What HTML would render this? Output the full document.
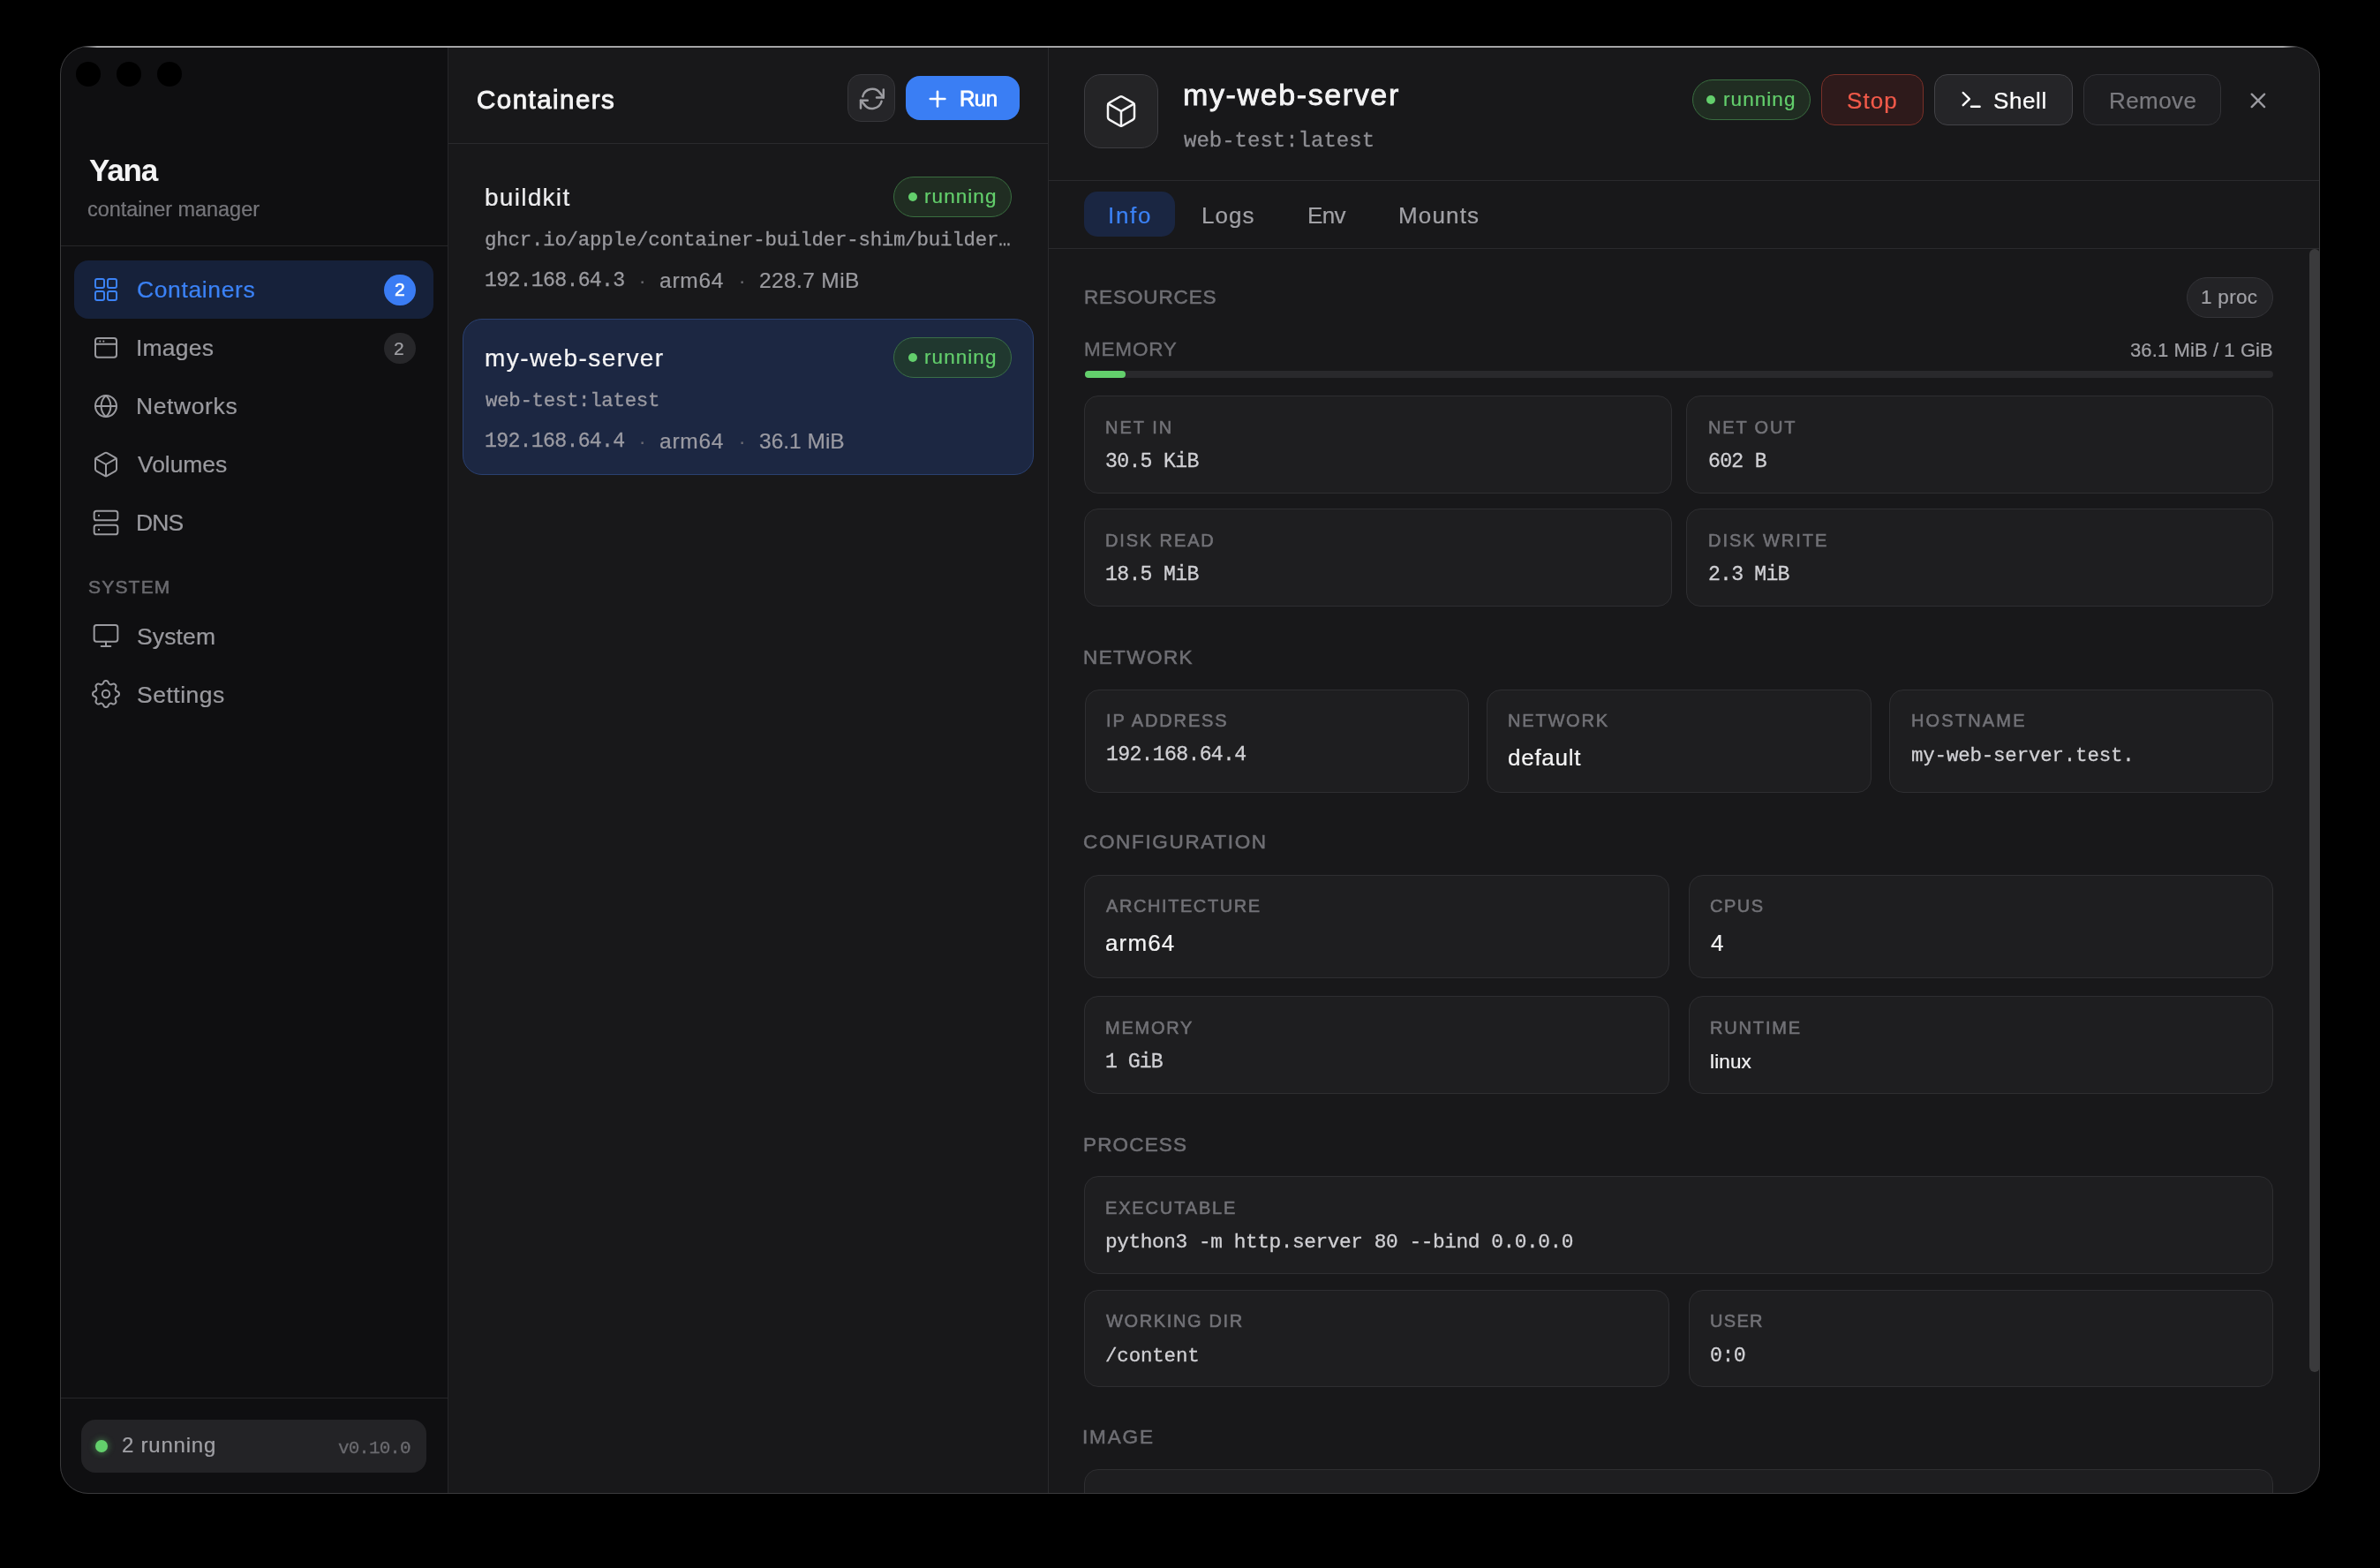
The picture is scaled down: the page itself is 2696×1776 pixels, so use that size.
<!DOCTYPE html>
<html><head><meta charset="utf-8"><title>Yana</title>
<style>
html,body{margin:0;padding:0;background:#000;width:2696px;height:1776px;overflow:hidden}
.t{position:absolute;white-space:nowrap;line-height:1;-webkit-font-smoothing:antialiased;will-change:transform}
.r{position:absolute;box-sizing:border-box}
#win{position:absolute;left:68px;top:52px;width:2560px;height:1640px;border-radius:32px;overflow:hidden;background:#18181a}
#win > .inner{position:absolute;left:-68px;top:-52px;width:2696px;height:1776px}
#frame{position:absolute;left:68px;top:52px;width:2560px;height:1640px;border-radius:32px;box-sizing:border-box;border:1px solid #3a3a3c;pointer-events:none}
#hl{position:absolute;left:94px;top:52px;width:2508px;height:2px;background:linear-gradient(to right,rgba(165,165,167,0),#a5a5a7 16px,#a5a5a7 calc(100% - 16px),rgba(165,165,167,0))}
</style></head><body>
<div id="win"><div class="inner">

<div class="r" style="left:68px;top:52px;width:439px;height:1640px;background:#0f0f11"></div>
<div class="r" style="left:507px;top:52px;width:1px;height:1640px;background:#262629"></div>
<div class="r" style="left:1187px;top:52px;width:1px;height:1640px;background:#2a2a2d"></div>
<div class="r" style="left:68px;top:278px;width:439px;height:1px;background:#262629"></div>
<div class="r" style="left:85.9px;top:69.8px;width:28px;height:28px;border-radius:14px;background:#000"></div>
<div class="r" style="left:131.9px;top:69.8px;width:28px;height:28px;border-radius:14px;background:#000"></div>
<div class="r" style="left:177.9px;top:69.8px;width:28px;height:28px;border-radius:14px;background:#000"></div>
<div class="r" style="left:84.00px;top:295.00px;width:407.00px;height:66.00px;background:#16213a;border-radius:16.00px;"></div>
<div class="r" style="left:434.50px;top:310.50px;width:36.00px;height:35.50px;background:#3a7cf4;border-radius:18.00px;"></div>
<div class="r" style="left:434.50px;top:376.50px;width:36.00px;height:35.50px;background:#27272a;border-radius:18.00px;"></div>
<div class="r" style="left:68.00px;top:1583.00px;width:439.00px;height:1.00px;background:#262629;border-radius:0.00px;"></div>
<div class="r" style="left:92.00px;top:1608.00px;width:391.00px;height:60.00px;background:#232326;border-radius:16.00px;"></div>
<div class="r" style="left:108.00px;top:1631.00px;width:14.00px;height:14.00px;background:#63cf6c;border-radius:7.00px;box-shadow:0 0 6px 2px rgba(94,196,106,0.35);"></div>
<div class="r" style="left:959.80px;top:84.00px;width:53.90px;height:53.80px;background:#252528;border:1px solid #36363a;border-radius:15.00px;"></div>
<div class="r" style="left:1026.00px;top:86.00px;width:129.00px;height:50.00px;background:#3a7ef4;border-radius:16.00px;"></div>
<div class="r" style="left:508.00px;top:162.00px;width:679.00px;height:1.00px;background:#2a2a2d;border-radius:0.00px;"></div>
<div class="r" style="left:1012.40px;top:200.30px;width:133.20px;height:45.30px;background:#202d22;border:1px solid #3a6e40;border-radius:23.00px;"></div>
<div class="r" style="left:1028.80px;top:217.80px;width:10.00px;height:10.00px;background:#63cf6c;border-radius:5.00px;"></div>
<div class="r" style="left:524.40px;top:361.20px;width:646.20px;height:177.30px;background:#1c2742;border:1px solid #2a4070;border-radius:22.00px;"></div>
<div class="r" style="left:1012.40px;top:382.00px;width:133.20px;height:45.60px;background:#20382f;border:1px solid #3a6e48;border-radius:23.00px;"></div>
<div class="r" style="left:1028.80px;top:399.80px;width:10.00px;height:10.00px;background:#63cf6c;border-radius:5.00px;"></div>
<div class="r" style="left:1228.20px;top:84.10px;width:83.50px;height:83.90px;background:#242426;border:1px solid #3c3c40;border-radius:19.00px;"></div>
<div class="r" style="left:1916.90px;top:90.30px;width:133.80px;height:45.40px;background:#202d22;border:1px solid #3a6e40;border-radius:23.00px;"></div>
<div class="r" style="left:1933.30px;top:107.80px;width:10.00px;height:10.00px;background:#63cf6c;border-radius:5.00px;"></div>
<div class="r" style="left:2062.90px;top:84.10px;width:115.80px;height:57.70px;background:#2e1a1b;border:1px solid #7a3028;border-radius:15.00px;"></div>
<div class="r" style="left:2191.00px;top:84.00px;width:156.60px;height:57.70px;background:#252528;border:1px solid #434347;border-radius:15.00px;"></div>
<div class="r" style="left:2360.20px;top:84.00px;width:155.50px;height:57.70px;background:#1d1d20;border:1px solid #323236;border-radius:15.00px;"></div>
<div class="r" style="left:1188.00px;top:204.00px;width:1440.00px;height:1.00px;background:#2a2a2d;border-radius:0.00px;"></div>
<div class="r" style="left:1228.40px;top:217.30px;width:102.20px;height:51.10px;background:#1a2642;border-radius:15.00px;"></div>
<div class="r" style="left:1188.00px;top:281.00px;width:1440.00px;height:1.00px;background:#2a2a2d;border-radius:0.00px;"></div>
<div class="r" style="left:2616.00px;top:282.00px;width:12.00px;height:1272.00px;background:#3a3a3c;border-radius:6.00px;"></div>
<div class="r" style="left:2476.80px;top:314.20px;width:98.50px;height:45.40px;background:#232326;border:1px solid #343438;border-radius:23.00px;"></div>
<div class="r" style="left:1228.50px;top:420.00px;width:1346.80px;height:8.00px;background:#29292c;border-radius:4.00px;"></div>
<div class="r" style="left:1228.50px;top:420.00px;width:46.50px;height:8.00px;background:#63cf6c;border-radius:4.00px;"></div>
<div class="r" style="left:1228.00px;top:448.20px;width:665.50px;height:111.20px;background:#1e1e20;border:1px solid #2e2e31;border-radius:16.00px;"></div>
<div class="r" style="left:1910.40px;top:448.20px;width:665.00px;height:111.20px;background:#1e1e20;border:1px solid #2e2e31;border-radius:16.00px;"></div>
<div class="r" style="left:1228.00px;top:576.20px;width:665.50px;height:110.80px;background:#1e1e20;border:1px solid #2e2e31;border-radius:16.00px;"></div>
<div class="r" style="left:1910.40px;top:576.20px;width:665.00px;height:110.80px;background:#1e1e20;border:1px solid #2e2e31;border-radius:16.00px;"></div>
<div class="r" style="left:1228.60px;top:780.50px;width:435.30px;height:117.10px;background:#1e1e20;border:1px solid #2e2e31;border-radius:16.00px;"></div>
<div class="r" style="left:1684.00px;top:780.50px;width:435.70px;height:117.10px;background:#1e1e20;border:1px solid #2e2e31;border-radius:16.00px;"></div>
<div class="r" style="left:2140.40px;top:780.50px;width:435.00px;height:117.10px;background:#1e1e20;border:1px solid #2e2e31;border-radius:16.00px;"></div>
<div class="r" style="left:1228.00px;top:990.50px;width:663.40px;height:117.10px;background:#1e1e20;border:1px solid #2e2e31;border-radius:16.00px;"></div>
<div class="r" style="left:1912.60px;top:990.50px;width:662.80px;height:117.10px;background:#1e1e20;border:1px solid #2e2e31;border-radius:16.00px;"></div>
<div class="r" style="left:1228.00px;top:1128.40px;width:663.40px;height:110.60px;background:#1e1e20;border:1px solid #2e2e31;border-radius:16.00px;"></div>
<div class="r" style="left:1912.60px;top:1128.40px;width:662.80px;height:110.60px;background:#1e1e20;border:1px solid #2e2e31;border-radius:16.00px;"></div>
<div class="r" style="left:1228.00px;top:1332.30px;width:1347.40px;height:110.90px;background:#1e1e20;border:1px solid #2e2e31;border-radius:16.00px;"></div>
<div class="r" style="left:1228.00px;top:1460.70px;width:663.40px;height:110.20px;background:#1e1e20;border:1px solid #2e2e31;border-radius:16.00px;"></div>
<div class="r" style="left:1912.60px;top:1460.70px;width:662.80px;height:110.20px;background:#1e1e20;border:1px solid #2e2e31;border-radius:16.00px;"></div>
<div class="r" style="left:1228.00px;top:1664.40px;width:1347.40px;height:135.60px;background:#1e1e20;border:1px solid #2e2e31;border-radius:16.00px;"></div>
<svg class="r" style="left:104.00px;top:312.00px" width="32" height="32" viewBox="0 0 24 24"><g fill="none" stroke="#3b82f6" stroke-width="1.5" stroke-linecap="round" stroke-linejoin="round"><rect x="3" y="3" width="7.5" height="7.5" rx="1.5"/><rect x="13.5" y="3" width="7.5" height="7.5" rx="1.5"/><rect x="3" y="13.5" width="7.5" height="7.5" rx="1.5"/><rect x="13.5" y="13.5" width="7.5" height="7.5" rx="1.5"/></g></svg>
<svg class="r" style="left:104.00px;top:378.00px" width="32" height="32" viewBox="0 0 24 24"><g fill="none" stroke="#9a9a9f" stroke-width="1.5" stroke-linecap="round" stroke-linejoin="round"><rect x="3" y="3.75" width="18" height="16.25" rx="2.2"/><path d="M3 8.9h18"/></g><circle cx="7" cy="6.45" r="0.8" fill="#9a9a9f"/><circle cx="10" cy="6.45" r="0.8" fill="#9a9a9f"/></svg>
<svg class="r" style="left:104.00px;top:444.00px" width="32" height="32" viewBox="0 0 24 24"><g fill="none" stroke="#9a9a9f" stroke-width="1.5" stroke-linecap="round" stroke-linejoin="round"><circle cx="12" cy="12" r="9"/><path d="M12 3a12 12 0 0 0 0 18a12 12 0 0 0 0-18"/><path d="M3 12h18"/></g></svg>
<svg class="r" style="left:104.00px;top:510.00px" width="32" height="32" viewBox="0 0 24 24"><g fill="none" stroke="#9a9a9f" stroke-width="1.5" stroke-linecap="round" stroke-linejoin="round"><path d="M21 8a2 2 0 0 0-1-1.73l-7-4a2 2 0 0 0-2 0l-7 4A2 2 0 0 0 3 8v8a2 2 0 0 0 1 1.73l7 4a2 2 0 0 0 2 0l7-4A2 2 0 0 0 21 16Z"/><path d="m3.3 7 8.7 5 8.7-5"/><path d="M12 22V12"/></g></svg>
<svg class="r" style="left:104.00px;top:576.00px" width="32" height="32" viewBox="0 0 24 24"><g fill="none" stroke="#9a9a9f" stroke-width="1.5" stroke-linecap="round" stroke-linejoin="round"><rect width="20" height="8" x="2" y="2" rx="2"/><rect width="20" height="8" x="2" y="14" rx="2"/></g><circle cx="6" cy="6" r="0.85" fill="#9a9a9f"/><circle cx="6" cy="18" r="0.85" fill="#9a9a9f"/></svg>
<svg class="r" style="left:104.00px;top:704.00px" width="32" height="32" viewBox="0 0 24 24"><g fill="none" stroke="#9a9a9f" stroke-width="1.5" stroke-linecap="round" stroke-linejoin="round"><rect width="20" height="14" x="2" y="3" rx="2"/><path d="M8 21h8"/><path d="M12 17v4"/></g></svg>
<svg class="r" style="left:100.00px;top:766.00px" width="40" height="40" viewBox="0 0 24 24"><g fill="none" stroke="#9a9a9f" stroke-width="1.2" stroke-linecap="round" stroke-linejoin="round"><path d="M10.325 4.317c.426 -1.756 2.924 -1.756 3.35 0a1.724 1.724 0 0 0 2.573 1.066c1.543 -.94 3.31 .826 2.37 2.37a1.724 1.724 0 0 0 1.065 2.572c1.756 .426 1.756 2.924 0 3.35a1.724 1.724 0 0 0 -1.066 2.573c.94 1.543 -.826 3.31 -2.37 2.37a1.724 1.724 0 0 0 -2.572 1.065c-.426 1.756 -2.924 1.756 -3.35 0a1.724 1.724 0 0 0 -2.573 -1.066c-1.543 .94 -3.31 -.826 -2.37 -2.37a1.724 1.724 0 0 0 -1.065 -2.572c-1.756 -.426 -1.756 -2.924 0 -3.35a1.724 1.724 0 0 0 1.066 -2.573c-.94 -1.543 .826 -3.31 2.37 -2.37c1 .608 2.296 .07 2.572 -1.065z"/><circle cx="12" cy="12" r="2.5"/></g></svg>
<svg class="r" style="left:1250.00px;top:106.00px" width="40" height="40" viewBox="0 0 24 24"><g fill="none" stroke="#f4f4f5" stroke-width="1.5" stroke-linecap="round" stroke-linejoin="round"><path d="M21 8a2 2 0 0 0-1-1.73l-7-4a2 2 0 0 0-2 0l-7 4A2 2 0 0 0 3 8v8a2 2 0 0 0 1 1.73l7 4a2 2 0 0 0 2 0l7-4A2 2 0 0 0 21 16Z"/><path d="m3.3 7 8.7 5 8.7-5"/><path d="M12 22V12"/></g></svg>
<svg class="r" style="left:960.00px;top:84.00px" width="54" height="54" viewBox="0 0 54 54"><g fill="none" stroke="#9c9ca1" stroke-width="2.5" stroke-linecap="round" stroke-linejoin="round"><path d="M17.3 25.2 A11 11 0 0 1 37 21.5 L40.8 26.4"/><path d="M40.8 17.6 V26.4 H33"/><path d="M38.6 30.8 A11 11 0 0 1 18.9 34.2 L15 29.8"/><path d="M15 38.4 V29.8 H22.8"/></g></svg>
<svg class="r" style="left:1050.00px;top:100.00px" width="24" height="24" viewBox="0 0 24 24"><g stroke="#ffffff" stroke-width="2.6" stroke-linecap="round"><path d="M12 3.8v16.6"/><path d="M3.8 12h16.6"/></g></svg>
<svg class="r" style="left:2219.00px;top:99.00px" width="28" height="28" viewBox="0 0 28 28"><g fill="none" stroke="#ffffff" stroke-width="2.4" stroke-linecap="round" stroke-linejoin="round"><path d="M4.7 6 L11.9 13.1 L4.7 20.2"/><path d="M14 21.8 H23.6"/></g></svg>
<svg class="r" style="left:2546.00px;top:102.00px" width="24" height="24" viewBox="0 0 24 24"><g stroke="#9a9aa0" stroke-width="2.4" stroke-linecap="round"><path d="M4.7 4.7 L19.1 19.1"/><path d="M19.1 4.7 L4.7 19.1"/></g></svg>
<div id="yana" class="t" style="left:100.80px;top:174.85px;font-size:35.00px;font-family:'Liberation Sans', sans-serif;font-weight:700;color:#f4f4f5;letter-spacing:-1.133px">Yana</div>
<div id="cmgr" class="t" style="left:99.30px;top:226.22px;font-size:23.50px;font-family:'Liberation Sans', sans-serif;font-weight:400;color:#76767b;letter-spacing:-0.062px;-webkit-text-stroke:0.22px #76767b">container manager</div>
<div id="nav0" class="t" style="left:154.70px;top:315.08px;font-size:26.50px;font-family:'Liberation Sans', sans-serif;font-weight:400;color:#3b82f6;letter-spacing:0.622px;-webkit-text-stroke:0.22px #3b82f6">Containers</div>
<div id="nav1" class="t" style="left:153.70px;top:381.08px;font-size:26.50px;font-family:'Liberation Sans', sans-serif;font-weight:400;color:#9a9a9f;letter-spacing:0.200px;-webkit-text-stroke:0.22px #9a9a9f">Images</div>
<div id="nav2" class="t" style="left:153.70px;top:447.08px;font-size:26.50px;font-family:'Liberation Sans', sans-serif;font-weight:400;color:#9a9a9f;letter-spacing:0.600px;-webkit-text-stroke:0.22px #9a9a9f">Networks</div>
<div id="nav3" class="t" style="left:155.70px;top:513.08px;font-size:26.50px;font-family:'Liberation Sans', sans-serif;font-weight:400;color:#9a9a9f;letter-spacing:-0.067px;-webkit-text-stroke:0.22px #9a9a9f">Volumes</div>
<div id="nav4" class="t" style="left:153.70px;top:579.08px;font-size:26.50px;font-family:'Liberation Sans', sans-serif;font-weight:400;color:#9a9a9f;letter-spacing:-0.900px;-webkit-text-stroke:0.22px #9a9a9f">DNS</div>
<div id="sys" class="t" style="left:100.00px;top:653.65px;font-size:21.00px;font-family:'Liberation Sans', sans-serif;font-weight:400;color:#6a6a6f;letter-spacing:1.200px;-webkit-text-stroke:0.55px #6a6a6f">SYSTEM</div>
<div id="nav5" class="t" style="left:154.70px;top:707.88px;font-size:26.50px;font-family:'Liberation Sans', sans-serif;font-weight:400;color:#9a9a9f;letter-spacing:0.120px;-webkit-text-stroke:0.22px #9a9a9f">System</div>
<div id="nav6" class="t" style="left:154.70px;top:773.88px;font-size:26.50px;font-family:'Liberation Sans', sans-serif;font-weight:400;color:#9a9a9f;letter-spacing:0.514px;-webkit-text-stroke:0.22px #9a9a9f">Settings</div>
<div id="b1" class="t" style="left:446.50px;top:317.45px;font-size:21.00px;font-family:'Liberation Sans', sans-serif;font-weight:400;color:#ffffff;letter-spacing:0.000px;-webkit-text-stroke:0.55px #ffffff">2</div>
<div id="b2" class="t" style="left:445.50px;top:383.55px;font-size:21.00px;font-family:'Liberation Sans', sans-serif;font-weight:400;color:#a1a1a6;letter-spacing:0.000px;-webkit-text-stroke:0.22px #a1a1a6">2</div>
<div id="run2" class="t" style="left:137.80px;top:1625.20px;font-size:24.00px;font-family:'Liberation Sans', sans-serif;font-weight:400;color:#a1a1a6;letter-spacing:0.775px;-webkit-text-stroke:0.22px #a1a1a6">2 running</div>
<div id="ver" class="t" style="left:383.30px;top:1629.64px;font-size:21.00px;font-family:'Liberation Mono', monospace;font-weight:400;color:#6a6a6f;letter-spacing:-0.933px;-webkit-text-stroke:0.30px #6a6a6f">v0.10.0</div>
<div id="ctitle" class="t" style="left:539.80px;top:97.83px;font-size:29.50px;font-family:'Liberation Sans', sans-serif;font-weight:400;color:#f4f4f5;letter-spacing:1.467px;-webkit-text-stroke:0.90px #f4f4f5">Containers</div>
<div id="runbtn" class="t" style="left:1087.20px;top:99.70px;font-size:24.00px;font-family:'Liberation Sans', sans-serif;font-weight:400;color:#ffffff;letter-spacing:-0.500px;-webkit-text-stroke:0.80px #ffffff">Run</div>
<div id="bk" class="t" style="left:549.00px;top:210.00px;font-size:28.00px;font-family:'Liberation Sans', sans-serif;font-weight:400;color:#ececee;letter-spacing:1.286px;-webkit-text-stroke:0.22px #ececee">buildkit</div>
<div id="bkimg" class="t" style="left:549.00px;top:261.38px;font-size:22.40px;font-family:'Liberation Mono', monospace;font-weight:400;color:#9a9a9f;letter-spacing:-0.205px;-webkit-text-stroke:0.30px #9a9a9f">ghcr.io/apple/container-builder-shim/builder…</div>
<div id="bkip" class="t" style="left:549.00px;top:307.37px;font-size:23.20px;font-family:'Liberation Mono', monospace;font-weight:400;color:#9a9a9f;letter-spacing:-0.709px;-webkit-text-stroke:0.30px #9a9a9f">192.168.64.3</div>
<div id="bkd1" class="t" style="left:723.50px;top:308.30px;font-size:22.00px;font-family:'Liberation Sans', sans-serif;font-weight:400;color:#6a6a6f;letter-spacing:0.000px;-webkit-text-stroke:0.22px #6a6a6f">·</div>
<div id="bkarch" class="t" style="left:747.00px;top:305.68px;font-size:24.50px;font-family:'Liberation Sans', sans-serif;font-weight:400;color:#9a9a9f;letter-spacing:0.750px;-webkit-text-stroke:0.22px #9a9a9f">arm64</div>
<div id="bkd2" class="t" style="left:836.90px;top:308.30px;font-size:22.00px;font-family:'Liberation Sans', sans-serif;font-weight:400;color:#6a6a6f;letter-spacing:0.000px;-webkit-text-stroke:0.22px #6a6a6f">·</div>
<div id="bkmem" class="t" style="left:860.00px;top:305.68px;font-size:24.50px;font-family:'Liberation Sans', sans-serif;font-weight:400;color:#9a9a9f;letter-spacing:0.375px;-webkit-text-stroke:0.22px #9a9a9f">228.7 MiB</div>
<div id="bkrun" class="t" style="left:1047.10px;top:212.07px;font-size:22.50px;font-family:'Liberation Sans', sans-serif;font-weight:400;color:#63cf6c;letter-spacing:1.067px;-webkit-text-stroke:0.22px #63cf6c">running</div>
<div id="ws" class="t" style="left:549.00px;top:392.10px;font-size:28.00px;font-family:'Liberation Sans', sans-serif;font-weight:400;color:#f4f4f5;letter-spacing:1.417px;-webkit-text-stroke:0.22px #f4f4f5">my-web-server</div>
<div id="wsimg" class="t" style="left:550.00px;top:442.98px;font-size:22.40px;font-family:'Liberation Mono', monospace;font-weight:400;color:#9a9aa2;letter-spacing:-0.300px;-webkit-text-stroke:0.30px #9a9aa2">web-test:latest</div>
<div id="wsip" class="t" style="left:549.00px;top:489.37px;font-size:23.20px;font-family:'Liberation Mono', monospace;font-weight:400;color:#9a9aa2;letter-spacing:-0.709px;-webkit-text-stroke:0.30px #9a9aa2">192.168.64.4</div>
<div id="wsd1" class="t" style="left:723.50px;top:490.30px;font-size:22.00px;font-family:'Liberation Sans', sans-serif;font-weight:400;color:#6a6a72;letter-spacing:0.000px;-webkit-text-stroke:0.22px #6a6a72">·</div>
<div id="wsarch" class="t" style="left:747.00px;top:488.18px;font-size:24.50px;font-family:'Liberation Sans', sans-serif;font-weight:400;color:#9a9aa2;letter-spacing:0.750px;-webkit-text-stroke:0.22px #9a9aa2">arm64</div>
<div id="wsd2" class="t" style="left:836.90px;top:490.30px;font-size:22.00px;font-family:'Liberation Sans', sans-serif;font-weight:400;color:#6a6a72;letter-spacing:0.000px;-webkit-text-stroke:0.22px #6a6a72">·</div>
<div id="wsmem" class="t" style="left:860.00px;top:488.18px;font-size:24.50px;font-family:'Liberation Sans', sans-serif;font-weight:400;color:#9a9aa2;letter-spacing:0.000px;-webkit-text-stroke:0.22px #9a9aa2">36.1 MiB</div>
<div id="wsrun" class="t" style="left:1047.10px;top:393.77px;font-size:22.50px;font-family:'Liberation Sans', sans-serif;font-weight:400;color:#63cf6c;letter-spacing:1.067px;-webkit-text-stroke:0.22px #63cf6c">running</div>
<div id="dtitle" class="t" style="left:1340.00px;top:90.30px;font-size:34.00px;font-family:'Liberation Sans', sans-serif;font-weight:400;color:#f4f4f5;letter-spacing:1.617px;-webkit-text-stroke:0.80px #f4f4f5">my-web-server</div>
<div id="dimg" class="t" style="left:1341.00px;top:147.56px;font-size:24.00px;font-family:'Liberation Mono', monospace;font-weight:400;color:#8e8e93;letter-spacing:0.000px;-webkit-text-stroke:0.30px #8e8e93">web-test:latest</div>
<div id="drun" class="t" style="left:1951.70px;top:102.08px;font-size:22.50px;font-family:'Liberation Sans', sans-serif;font-weight:400;color:#63cf6c;letter-spacing:1.067px;-webkit-text-stroke:0.22px #63cf6c">running</div>
<div id="stop" class="t" style="left:2092.10px;top:101.30px;font-size:26.00px;font-family:'Liberation Sans', sans-serif;font-weight:400;color:#f25a4a;letter-spacing:1.067px;-webkit-text-stroke:0.22px #f25a4a">Stop</div>
<div id="shell" class="t" style="left:2258.10px;top:100.90px;font-size:26.00px;font-family:'Liberation Sans', sans-serif;font-weight:400;color:#ffffff;letter-spacing:0.600px;-webkit-text-stroke:0.22px #ffffff">Shell</div>
<div id="remove" class="t" style="left:2388.50px;top:100.90px;font-size:26.00px;font-family:'Liberation Sans', sans-serif;font-weight:400;color:#7a7a7f;letter-spacing:0.420px;-webkit-text-stroke:0.22px #7a7a7f">Remove</div>
<div id="tinfo" class="t" style="left:1255.00px;top:230.60px;font-size:26.00px;font-family:'Liberation Sans', sans-serif;font-weight:400;color:#3b82f6;letter-spacing:1.667px;-webkit-text-stroke:0.22px #3b82f6">Info</div>
<div id="tlogs" class="t" style="left:1361.40px;top:230.60px;font-size:26.00px;font-family:'Liberation Sans', sans-serif;font-weight:400;color:#a1a1a6;letter-spacing:1.067px;-webkit-text-stroke:0.22px #a1a1a6">Logs</div>
<div id="tenv" class="t" style="left:1480.50px;top:230.60px;font-size:26.00px;font-family:'Liberation Sans', sans-serif;font-weight:400;color:#a1a1a6;letter-spacing:-0.700px;-webkit-text-stroke:0.22px #a1a1a6">Env</div>
<div id="tmnt" class="t" style="left:1584.00px;top:230.60px;font-size:26.00px;font-family:'Liberation Sans', sans-serif;font-weight:400;color:#a1a1a6;letter-spacing:1.160px;-webkit-text-stroke:0.22px #a1a1a6">Mounts</div>
<div id="sres" class="t" style="left:1227.50px;top:326.18px;font-size:22.50px;font-family:'Liberation Sans', sans-serif;font-weight:400;color:#6f6f74;letter-spacing:0.875px;-webkit-text-stroke:0.55px #6f6f74">RESOURCES</div>
<div id="proc" class="t" style="left:2493.00px;top:326.18px;font-size:22.50px;font-family:'Liberation Sans', sans-serif;font-weight:400;color:#a1a1a6;letter-spacing:0.300px;-webkit-text-stroke:0.22px #a1a1a6">1 proc</div>
<div id="smem" class="t" style="left:1227.50px;top:384.98px;font-size:22.50px;font-family:'Liberation Sans', sans-serif;font-weight:400;color:#6f6f74;letter-spacing:0.800px;-webkit-text-stroke:0.40px #6f6f74">MEMORY</div>
<div id="memv" class="t" style="left:2413.40px;top:385.60px;font-size:22.00px;font-family:'Liberation Sans', sans-serif;font-weight:400;color:#a1a1a6;letter-spacing:0.107px;-webkit-text-stroke:0.22px #a1a1a6">36.1 MiB / 1 GiB</div>
<div id="l_NET_IN" class="t" style="left:1252.40px;top:473.70px;font-size:20.00px;font-family:'Liberation Sans', sans-serif;font-weight:400;color:#727277;letter-spacing:2.000px;-webkit-text-stroke:0.55px #727277">NET IN</div>
<div id="v_NET_IN" class="t" style="left:1252.40px;top:512.07px;font-size:23.20px;font-family:'Liberation Mono', monospace;font-weight:400;color:#d0d0d4;letter-spacing:-0.714px;-webkit-text-stroke:0.30px #d0d0d4">30.5 KiB</div>
<div id="l_NET_OUT" class="t" style="left:1935.00px;top:473.70px;font-size:20.00px;font-family:'Liberation Sans', sans-serif;font-weight:400;color:#727277;letter-spacing:1.833px;-webkit-text-stroke:0.55px #727277">NET OUT</div>
<div id="v_NET_OUT" class="t" style="left:1935.00px;top:512.07px;font-size:23.20px;font-family:'Liberation Mono', monospace;font-weight:400;color:#d0d0d4;letter-spacing:-0.750px;-webkit-text-stroke:0.30px #d0d0d4">602 B</div>
<div id="l_DISK_READ" class="t" style="left:1252.40px;top:601.70px;font-size:20.00px;font-family:'Liberation Sans', sans-serif;font-weight:400;color:#727277;letter-spacing:1.875px;-webkit-text-stroke:0.55px #727277">DISK READ</div>
<div id="v_DISK_READ" class="t" style="left:1252.40px;top:640.07px;font-size:23.20px;font-family:'Liberation Mono', monospace;font-weight:400;color:#d0d0d4;letter-spacing:-0.714px;-webkit-text-stroke:0.30px #d0d0d4">18.5 MiB</div>
<div id="l_DISK_WRITE" class="t" style="left:1935.00px;top:601.70px;font-size:20.00px;font-family:'Liberation Sans', sans-serif;font-weight:400;color:#727277;letter-spacing:1.956px;-webkit-text-stroke:0.55px #727277">DISK WRITE</div>
<div id="v_DISK_WRITE" class="t" style="left:1935.00px;top:640.07px;font-size:23.20px;font-family:'Liberation Mono', monospace;font-weight:400;color:#d0d0d4;letter-spacing:-0.833px;-webkit-text-stroke:0.30px #d0d0d4">2.3 MiB</div>
<div id="snet" class="t" style="left:1227.40px;top:733.67px;font-size:22.50px;font-family:'Liberation Sans', sans-serif;font-weight:400;color:#6f6f74;letter-spacing:1.433px;-webkit-text-stroke:0.55px #6f6f74">NETWORK</div>
<div id="l_IP_ADDRESS" class="t" style="left:1252.80px;top:806.00px;font-size:20.00px;font-family:'Liberation Sans', sans-serif;font-weight:400;color:#727277;letter-spacing:1.889px;-webkit-text-stroke:0.55px #727277">IP ADDRESS</div>
<div id="v_IP_ADDRESS" class="t" style="left:1252.80px;top:844.37px;font-size:23.20px;font-family:'Liberation Mono', monospace;font-weight:400;color:#d0d0d4;letter-spacing:-0.709px;-webkit-text-stroke:0.30px #d0d0d4">192.168.64.4</div>
<div id="l_NETWORK" class="t" style="left:1708.40px;top:806.00px;font-size:20.00px;font-family:'Liberation Sans', sans-serif;font-weight:400;color:#727277;letter-spacing:1.800px;-webkit-text-stroke:0.55px #727277">NETWORK</div>
<div id="v_NETWORK" class="t" style="left:1708.40px;top:844.80px;font-size:26.00px;font-family:'Liberation Sans', sans-serif;font-weight:400;color:#f4f4f5;letter-spacing:0.733px;-webkit-text-stroke:0.22px #f4f4f5">default</div>
<div id="l_HOSTNAME" class="t" style="left:2165.00px;top:806.00px;font-size:20.00px;font-family:'Liberation Sans', sans-serif;font-weight:400;color:#727277;letter-spacing:2.171px;-webkit-text-stroke:0.55px #727277">HOSTNAME</div>
<div id="v_HOSTNAME" class="t" style="left:2165.00px;top:844.98px;font-size:22.40px;font-family:'Liberation Mono', monospace;font-weight:400;color:#d0d0d4;letter-spacing:-0.144px;-webkit-text-stroke:0.30px #d0d0d4">my-web-server.test.</div>
<div id="scfg" class="t" style="left:1227.40px;top:943.08px;font-size:22.50px;font-family:'Liberation Sans', sans-serif;font-weight:400;color:#6f6f74;letter-spacing:1.667px;-webkit-text-stroke:0.55px #6f6f74">CONFIGURATION</div>
<div id="l_ARCHITECTURE" class="t" style="left:1253.40px;top:1016.00px;font-size:20.00px;font-family:'Liberation Sans', sans-serif;font-weight:400;color:#727277;letter-spacing:1.582px;-webkit-text-stroke:0.55px #727277">ARCHITECTURE</div>
<div id="v_ARCHITECTURE" class="t" style="left:1252.40px;top:1054.80px;font-size:26.00px;font-family:'Liberation Sans', sans-serif;font-weight:400;color:#f4f4f5;letter-spacing:1.150px;-webkit-text-stroke:0.22px #f4f4f5">arm64</div>
<div id="l_CPUS" class="t" style="left:1936.80px;top:1016.00px;font-size:20.00px;font-family:'Liberation Sans', sans-serif;font-weight:400;color:#727277;letter-spacing:1.533px;-webkit-text-stroke:0.55px #727277">CPUS</div>
<div id="v_CPUS" class="t" style="left:1937.80px;top:1054.80px;font-size:26.00px;font-family:'Liberation Sans', sans-serif;font-weight:400;color:#f4f4f5;letter-spacing:0.000px;-webkit-text-stroke:0.22px #f4f4f5">4</div>
<div id="l_MEMORY" class="t" style="left:1252.40px;top:1153.90px;font-size:20.00px;font-family:'Liberation Sans', sans-serif;font-weight:400;color:#727277;letter-spacing:1.760px;-webkit-text-stroke:0.55px #727277">MEMORY</div>
<div id="v_MEMORY" class="t" style="left:1252.40px;top:1192.27px;font-size:23.20px;font-family:'Liberation Mono', monospace;font-weight:400;color:#d0d0d4;letter-spacing:-1.000px;-webkit-text-stroke:0.30px #d0d0d4">1 GiB</div>
<div id="l_RUNTIME" class="t" style="left:1936.80px;top:1153.90px;font-size:20.00px;font-family:'Liberation Sans', sans-serif;font-weight:400;color:#727277;letter-spacing:1.833px;-webkit-text-stroke:0.55px #727277">RUNTIME</div>
<div id="v_RUNTIME" class="t" style="left:1936.80px;top:1191.68px;font-size:22.50px;font-family:'Liberation Sans', sans-serif;font-weight:400;color:#f4f4f5;letter-spacing:0.150px;-webkit-text-stroke:0.22px #f4f4f5">linux</div>
<div id="sproc" class="t" style="left:1227.40px;top:1285.58px;font-size:22.50px;font-family:'Liberation Sans', sans-serif;font-weight:400;color:#6f6f74;letter-spacing:1.167px;-webkit-text-stroke:0.55px #6f6f74">PROCESS</div>
<div id="l_EXECUTABLE" class="t" style="left:1252.40px;top:1357.80px;font-size:20.00px;font-family:'Liberation Sans', sans-serif;font-weight:400;color:#727277;letter-spacing:1.844px;-webkit-text-stroke:0.55px #727277">EXECUTABLE</div>
<div id="v_EXECUTABLE" class="t" style="left:1252.40px;top:1396.47px;font-size:22.80px;font-family:'Liberation Mono', monospace;font-weight:400;color:#d0d0d4;letter-spacing:-0.431px;-webkit-text-stroke:0.30px #d0d0d4">python3 -m http.server 80 --bind 0.0.0.0</div>
<div id="l_WORKING_DIR" class="t" style="left:1253.40px;top:1486.20px;font-size:20.00px;font-family:'Liberation Sans', sans-serif;font-weight:400;color:#727277;letter-spacing:1.640px;-webkit-text-stroke:0.55px #727277">WORKING DIR</div>
<div id="v_WORKING_DIR" class="t" style="left:1252.40px;top:1525.18px;font-size:22.40px;font-family:'Liberation Mono', monospace;font-weight:400;color:#d0d0d4;letter-spacing:-0.114px;-webkit-text-stroke:0.30px #d0d0d4">/content</div>
<div id="l_USER" class="t" style="left:1936.80px;top:1486.20px;font-size:20.00px;font-family:'Liberation Sans', sans-serif;font-weight:400;color:#727277;letter-spacing:1.333px;-webkit-text-stroke:0.55px #727277">USER</div>
<div id="v_USER" class="t" style="left:1936.80px;top:1524.57px;font-size:23.20px;font-family:'Liberation Mono', monospace;font-weight:400;color:#d0d0d4;letter-spacing:-0.500px;-webkit-text-stroke:0.30px #d0d0d4">0:0</div>
<div id="simg" class="t" style="left:1226.40px;top:1617.38px;font-size:22.50px;font-family:'Liberation Sans', sans-serif;font-weight:400;color:#6f6f74;letter-spacing:1.850px;-webkit-text-stroke:0.55px #6f6f74">IMAGE</div>
</div></div><div id="frame"></div><div id="hl"></div>
</body></html>
